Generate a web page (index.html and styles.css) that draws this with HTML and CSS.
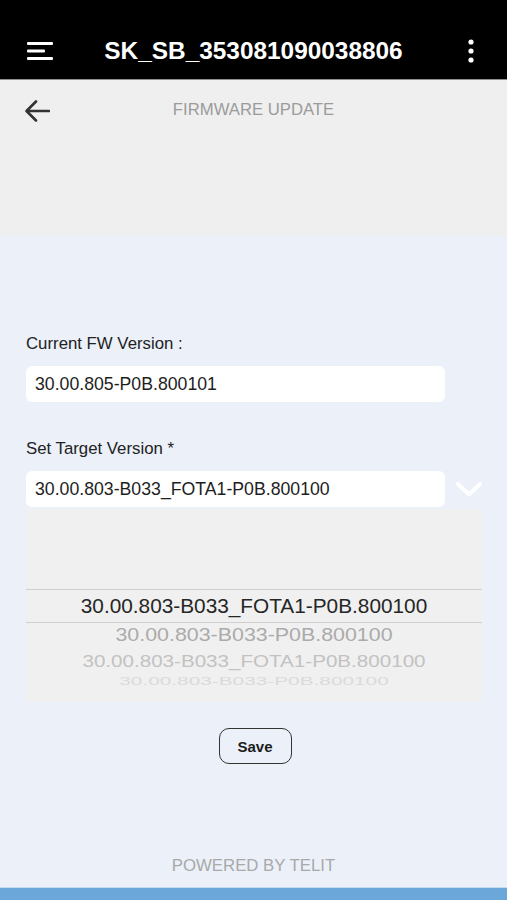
FILE: index.html
```html
<!DOCTYPE html>
<html>
<head>
<meta charset="utf-8">
<link rel="stylesheet" href="styles.css">
</head>
<body>
<div class="app">
  <header class="topbar">
    <div class="tb-left">
      <svg class="hamburger" width="26" height="20" viewBox="0 0 26 20">
        <rect x="0" y="1" width="26" height="3" rx="1" fill="#fff"/>
        <rect x="0" y="8.5" width="18" height="3" rx="1" fill="#fff"/>
        <rect x="0" y="16" width="26" height="3" rx="1" fill="#fff"/>
      </svg>
    </div>
    <div class="tb-title">SK_SB_353081090038806</div>
    <div class="tb-right">
      <svg class="kebab" width="6" height="24" viewBox="0 0 6 24">
        <circle cx="3" cy="3" r="2.6" fill="#fff"/>
        <circle cx="3" cy="12" r="2.6" fill="#fff"/>
        <circle cx="3" cy="21" r="2.6" fill="#fff"/>
      </svg>
    </div>
  </header>

  <section class="subbar">
    <div class="subbar-row">
      <svg class="back" width="26" height="24" viewBox="0 0 26 24">
        <path d="M25 12 H3 M12 2.5 L2.5 12 L12 21.5" fill="none" stroke="#333" stroke-width="2.6" stroke-linecap="round" stroke-linejoin="round"/>
      </svg>
      <div class="subbar-title">FIRMWARE UPDATE</div>
    </div>
  </section>

  <main class="content">
    <div class="field">
      <div class="label">Current FW Version :</div>
      <div class="input">30.00.805-P0B.800101</div>
    </div>

    <div class="field field-target">
      <div class="label">Set Target Version *</div>
      <div class="input-row">
        <div class="input">30.00.803-B033_FOTA1-P0B.800100</div>
        <svg class="chevron" width="28" height="17" viewBox="0 0 28 17">
          <path d="M3 3 L14 13.5 L25 3" fill="none" stroke="#fff" stroke-width="4" stroke-linecap="round" stroke-linejoin="round"/>
        </svg>
      </div>
    </div>

    <div class="picker">
      <div class="picker-space"></div>
      <div class="picker-row selected">30.00.803-B033_FOTA1-P0B.800100</div>
      <div class="picker-row r2">30.00.803-B033-P0B.800100</div>
      <div class="picker-row r3">30.00.803-B033_FOTA1-P0B.800100</div>
      <div class="picker-row r4">30.00.803-B033-P0B.800100</div>
    </div>

    <div class="actions">
      <button class="save">Save</button>
    </div>

    <div class="powered">POWERED BY TELIT</div>
  </main>

  <div class="bottombar"></div>
</div>
</body>
</html>
```

FILE: styles.css
```css
* { box-sizing: border-box; }
html, body { margin: 0; padding: 0; }
body {
  width: 507px;
  height: 900px;
  overflow: hidden;
  font-family: "Liberation Sans", Arial, sans-serif;
  background: #ebf0f9;
}
.app {
  display: flex;
  flex-direction: column;
  height: 900px;
}

.topbar {
  height: 80px;
  flex: 0 0 80px;
  background: #000;
  border-bottom: 1px solid #8e8e8e;
  display: grid;
  grid-template-columns: 1fr auto 1fr;
  align-items: center;
  padding-top: 23px;
}
.tb-left { padding-left: 27px; display: flex; align-items: center; }
.tb-right { display: flex; justify-content: flex-end; padding-right: 33px; align-items: center; }
.hamburger, .kebab { display: block; }
.tb-title {
  color: #fff;
  font-weight: bold;
  font-size: 24.4px;
}

.subbar {
  flex: 0 0 156px;
  background: #efefef;
}
.subbar-row {
  position: relative;
  height: 62px;
  display: flex;
  align-items: center;
  justify-content: center;
}
.back {
  position: absolute;
  left: 24px;
  top: 19px;
}
.subbar-title {
  color: #9b9b9b;
  font-size: 16.7px;
  margin-top: -2px;
}

.content {
  flex: 1;
  display: flex;
  flex-direction: column;
  padding: 98px 0 11px 26px;
}
.label {
  font-size: 16.8px;
  line-height: 20px;
  color: #222;
  height: 20px;
}
.input {
  width: 419px;
  height: 36px;
  background: #fff;
  border-radius: 6px;
  padding-left: 9px;
  font-size: 17.7px;
  line-height: 36px;
  color: #1e1e1e;
  margin-top: 12px;
}
.field-target { margin-top: 37px; }
.input-row {
  display: flex;
  align-items: center;
  gap: 10px;
}
.input-row .input { margin-top: 12px; }
.chevron { margin-top: 12px; display: block; }

.picker {
  margin-top: 2px;
  width: 456px;
  height: 193px;
  background: #f0f0f0;
  display: flex;
  flex-direction: column;
  overflow: hidden;
}
.picker-space { height: 80px; flex: 0 0 80px; }
.picker-row {
  text-align: center;
  white-space: nowrap;
  font-size: 20.8px;
}
.picker-row.selected {
  height: 34px;
  line-height: 32px;
  border-top: 1px solid #cfcfcf;
  border-bottom: 1px solid #cfcfcf;
  color: #262626;
}
.picker-row.r2 {
  height: 25px;
  line-height: 25px;
  color: #ababab;
  font-size: 21.4px;
  transform: scaleY(0.9);
}
.picker-row.r3 {
  height: 26px;
  line-height: 26px;
  color: #c2c2c2;
  font-size: 20.6px;
  transform: scaleY(0.8);
}
.picker-row.r4 {
  height: 14px;
  line-height: 14px;
  color: #dadada;
  font-size: 20.8px;
  transform: scaleY(0.5);
}

.actions {
  width: 456px;
  display: flex;
  justify-content: center;
  margin-top: 26px;
}
.save {
  width: 73px;
  height: 36px;
  border: 1.6px solid #333;
  border-radius: 10px;
  background: transparent;
  font-family: "Liberation Sans", Arial, sans-serif;
  font-weight: bold;
  font-size: 15px;
  color: #1c1c1c;
  padding: 0;
  margin-left: 2px;
}

.powered {
  margin-top: auto;
  width: 455px;
  text-align: center;
  color: #a9a9a9;
  font-size: 16.8px;
  line-height: 20px;
}

.bottombar {
  flex: 0 0 13px;
  background: #6ca7da;
  border-top: 1px solid #c4dbf0;
}
```
